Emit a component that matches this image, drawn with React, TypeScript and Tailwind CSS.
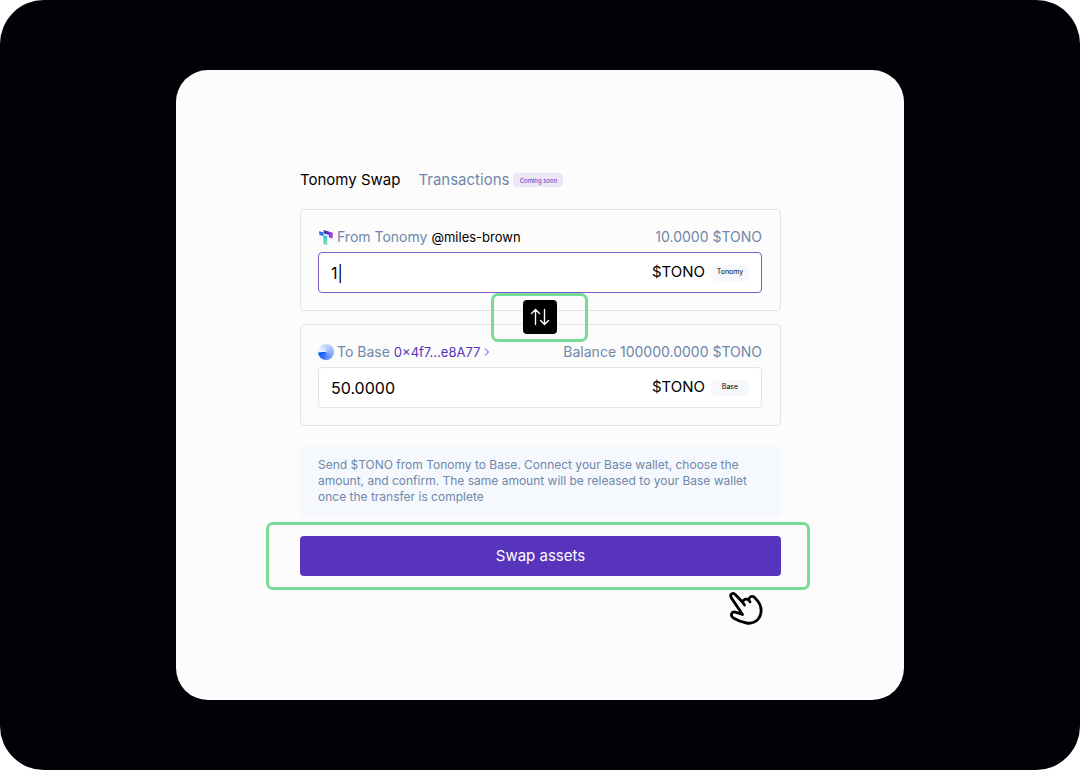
import { useState } from "react";
import type { ReactNode } from "react";

function TonomyLogo() {
  return (
    <svg viewBox="0 0 14 15" className="h-[15px] w-[14px]" aria-hidden="true">
      <defs>
        <linearGradient id="tonomy-top" x1="0" y1="0" x2="1" y2="0">
          <stop offset="0" stopColor="#2b2fa8" />
          <stop offset="0.5" stopColor="#6a35c8" />
          <stop offset="1" stopColor="#c04fdc" />
        </linearGradient>
        <linearGradient id="tonomy-stem" x1="0" y1="0" x2="0" y2="1">
          <stop offset="0" stopColor="#35b5e8" />
          <stop offset="1" stopColor="#7be8a4" />
        </linearGradient>
      </defs>
      <path d="M0 1.2 4.6 2.2 4.4 6 0.4 5Z" fill="#2d6fe0" />
      <path d="M4.4 5 8.2 6 8.2 15 4.4 14Z" fill="url(#tonomy-stem)" />
      <path d="M4.6 0 14 2.8 13.6 8.6 10 7.6 9.8 5 5 3.6Z" fill="url(#tonomy-top)" />
    </svg>
  );
}

function BaseLogo() {
  return (
    <span
      aria-hidden="true"
      className="size-4 rounded-full bg-[conic-gradient(from_270deg,#f0f5ff,#c3d4fd_25%,#93b3fc_50%,#5f8ffb_72%,#0b55fa_98%,#f0f5ff)]"
    />
  );
}

type PanelProps = {
  id: string;
  icon: ReactNode;
  label: string;
  account: ReactNode;
  balance: string;
  network: string;
  value: string;
  onChange: (value: string) => void;
  active?: boolean;
};

function AssetPanel({ id, icon, label, account, balance, network, value, onChange, active }: PanelProps) {
  return (
    <section className="rounded border border-[#dfe6f2] pt-[17px] pr-[18px] pb-[17px] pl-[17px]">
      <div className="flex h-5 items-center justify-between text-sm text-[#6f87ab]">
        <div className="flex items-center">
          <span className="mr-[3px] flex w-4 justify-center">{icon}</span>
          <label htmlFor={id}>{label}</label>
          {account}
        </div>
        <span>{balance}</span>
      </div>
      <div
        className={`mt-[5px] flex h-[41px] items-center rounded border bg-white px-3 text-[15px] text-black ${
          active ? "border-[#8059cc]" : "border-[#dfe6f2]"
        }`}
      >
        <input
          id={id}
          value={value}
          onChange={(e) => onChange(e.target.value)}
          className="min-w-0 flex-1 bg-transparent text-base outline-none"
        />
        <span>$TONO</span>
        <span className="ml-[6px] flex h-4 w-[38px] items-center justify-center rounded-sm bg-[#f5f9fd] text-[7px]">
          {network}
        </span>
      </div>
    </section>
  );
}

export default function App() {
  const [from, setFrom] = useState("1|");
  const [to, setTo] = useState("50.0000");

  return (
    <main className="flex min-h-screen items-center justify-center rounded-[44px] bg-[#030008] px-6 py-[70px] font-['Inter',sans-serif]">
      <div className="w-full max-w-[728px] rounded-[32px] bg-[#fcfcfc] pt-[100px] pr-[123px] pb-[124px] pl-[124px]">
        <nav className="flex h-5 items-center text-[15px]">
          <a href="#swap" className="text-black">Tonomy Swap</a>
          <a href="#transactions" className="ml-[18px] text-[#6f87ab]">Transactions</a>
          <span className="ml-1 flex h-[14px] w-[50px] items-center justify-center rounded-sm bg-[#ece6f7] text-[6px] text-[#5833bb]">
            Coming soon
          </span>
        </nav>

        <div className="mt-[19px]">
          <AssetPanel
            id="from-amount"
            icon={<TonomyLogo />}
            label="From Tonomy"
            account={<span className="ml-1 text-[13px] text-black">@miles-brown</span>}
            balance="10.0000 $TONO"
            network="Tonomy"
            value={from}
            onChange={setFrom}
            active
          />
          <div className="relative h-[13px]">
            <div className="pointer-events-none absolute inset-x-0 -top-[18px] flex justify-center pr-[2px]">
              <div className="flex h-[49px] w-[97px] items-start justify-center rounded-[7px] border-3 border-[#77dc98] pt-1 pl-px">
                <button
                  type="button"
                  aria-label="Reverse direction"
                  className="pointer-events-auto flex size-[34px] items-center justify-center rounded bg-black text-white"
                >
                  <svg viewBox="0 0 20 18" className="h-[18px] w-5" fill="none" stroke="currentColor" strokeWidth="1.4" strokeLinecap="round" strokeLinejoin="round" aria-hidden="true">
                    <path d="M5.5 16.5V1.5M1.5 5.5l4-4 4 4M14.5 1.5v15M10.5 12.5l4 4 4-4" />
                  </svg>
                </button>
              </div>
            </div>
          </div>
          <AssetPanel
            id="to-amount"
            icon={<BaseLogo />}
            label="To Base"
            account={
              <a href="#wallet" className="ml-1 flex items-center text-[13px] text-[#5833bb]">
                0×4f7...e8A77
                <svg viewBox="0 0 6 8" className="ml-1 h-2 w-[6px]" fill="none" stroke="currentColor" aria-hidden="true">
                  <path d="M1 0.5 4.5 4 1 7.5" />
                </svg>
              </a>
            }
            balance="Balance 100000.0000 $TONO"
            network="Base"
            value={to}
            onChange={setTo}
          />
        </div>

        <p className="mt-[19px] rounded bg-[#f5f9fd] px-[18px] py-3 text-xs leading-4 text-[#6f87ab]">
          Send $TONO from Tonomy to Base. Connect your Base wallet, choose the amount, and confirm. The same amount will
          be released to your Base wallet once the transfer is complete
        </p>

        <div className="relative mt-[19px]">
          <button type="button" className="block h-10 w-full rounded bg-[#5833bb] text-[15px] text-white">
            Swap assets
          </button>
          <div className="pointer-events-none absolute -top-[14px] -right-[29px] -bottom-[14px] -left-[34px] rounded-[7px] border-3 border-[#77dc98]" />
          <svg
            viewBox="0 0 36 36"
            className="pointer-events-none absolute top-[54px] right-[17px] size-9"
            fill="none"
            stroke="#000"
            strokeWidth="2.8"
            strokeLinejoin="round"
            strokeLinecap="round"
            aria-hidden="true"
          >
            <path d="M14.5 24.5 3.2 7.6C1.4 4.2 5 1.8 7.5 4.8L14.6 12.2C15.5 8.8 19 8.2 20.8 10.2 21 6 25 5.2 27.2 8.2 31.5 12.2 34 17.5 32.8 23.5 31.2 30.8 25 34.2 18.5 33 13.5 32 9 30.2 5.3 28 1.8 25.4 3.6 21 7.3 22.2L14.5 24.5M14.6 12.2 16.5 15M20.8 10.2 22 11.8" />
          </svg>
        </div>
      </div>
    </main>
  );
}
